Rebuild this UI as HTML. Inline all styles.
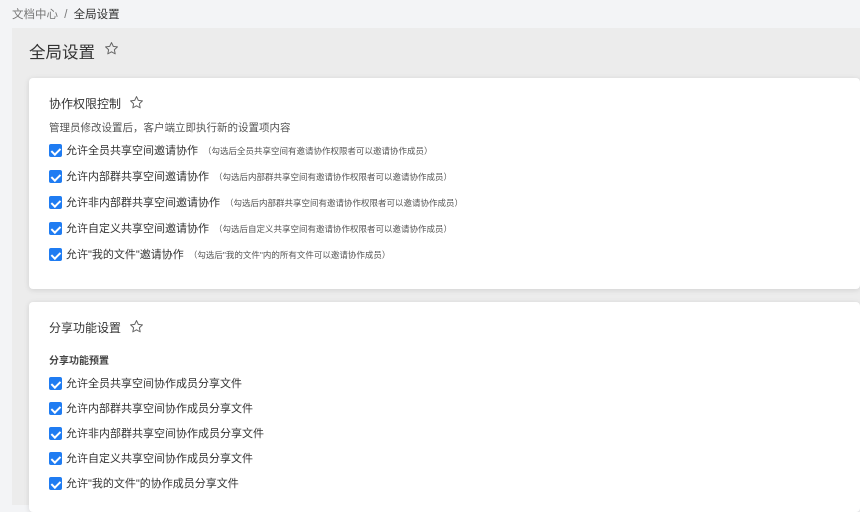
<!DOCTYPE html>
<html><head><meta charset="utf-8"><style>
*{margin:0;padding:0;box-sizing:border-box}
body{width:860px;height:505px;overflow:hidden;background:#f3f4f6;font-family:"Liberation Sans","Noto Sans CJK SC",sans-serif;color:#333;position:relative}
.abs{position:absolute;white-space:nowrap}
.panel{position:absolute;left:12px;top:28px;width:848px;height:477px;background:#ececec}
.card{position:absolute;left:29px;width:831px;background:#fff;border-radius:4px;box-shadow:0 1px 6px rgba(0,0,0,.12)}
.cb{position:absolute;left:49px;width:13px;height:13px;background:#1f7cf2;border-radius:2px}
.cb:after{content:"";position:absolute;left:4px;top:1.5px;width:3.5px;height:7px;border:solid #fff;border-width:0 2px 2px 0;transform:rotate(45deg)}
.lb{position:absolute;left:66px;font-size:11px;color:#333;white-space:nowrap;line-height:14px}
.lb small{font-size:8.5px;color:#555;margin-left:5px}
</style></head><body>
<div class="abs" style="left:12px;top:6px;font-size:11.5px;color:#777">文档中心 <span style="margin:0 3px">/</span> <span style="color:#333">全局设置</span></div>
<div class="panel"></div>
<div class="abs" style="left:29px;top:39px;font-size:16.5px;color:#333">全局设置</div>
<svg class="abs" style="left:104px;top:41px" width="15" height="15" viewBox="0 0 24 24"><path d="M12 2.5l2.9 6.1 6.6.8-4.9 4.6 1.3 6.6L12 17.3l-5.9 3.3 1.3-6.6-4.9-4.6 6.6-.8z" fill="none" stroke="#666" stroke-width="1.6" stroke-linejoin="round"/></svg>
<div class="card" style="top:78px;height:211px"></div>
<div class="card" style="top:302px;height:210px"></div>
<div class="abs" style="left:49px;top:95px;font-size:12px">协作权限控制</div>
<svg class="abs" style="left:129px;top:95px" width="15" height="15" viewBox="0 0 24 24"><path d="M12 2.5l2.9 6.1 6.6.8-4.9 4.6 1.3 6.6L12 17.3l-5.9 3.3 1.3-6.6-4.9-4.6 6.6-.8z" fill="none" stroke="#666" stroke-width="1.6" stroke-linejoin="round"/></svg>
<div class="abs" style="left:49px;top:120px;font-size:10.5px;color:#555">管理员修改设置后，客户端立即执行新的设置项内容</div>
<div class="cb" style="top:144px"></div><div class="lb" style="top:144px">允许全员共享空间邀请协作<small>（勾选后全员共享空间有邀请协作权限者可以邀请协作成员）</small></div>
<div class="cb" style="top:170px"></div><div class="lb" style="top:170px">允许内部群共享空间邀请协作<small>（勾选后内部群共享空间有邀请协作权限者可以邀请协作成员）</small></div>
<div class="cb" style="top:196px"></div><div class="lb" style="top:196px">允许非内部群共享空间邀请协作<small>（勾选后内部群共享空间有邀请协作权限者可以邀请协作成员）</small></div>
<div class="cb" style="top:222px"></div><div class="lb" style="top:222px">允许自定义共享空间邀请协作<small>（勾选后自定义共享空间有邀请协作权限者可以邀请协作成员）</small></div>
<div class="cb" style="top:248px"></div><div class="lb" style="top:248px">允许"我的文件"邀请协作<small>（勾选后"我的文件"内的所有文件可以邀请协作成员）</small></div>
<div class="abs" style="left:49px;top:319px;font-size:12px">分享功能设置</div>
<svg class="abs" style="left:129px;top:319px" width="15" height="15" viewBox="0 0 24 24"><path d="M12 2.5l2.9 6.1 6.6.8-4.9 4.6 1.3 6.6L12 17.3l-5.9 3.3 1.3-6.6-4.9-4.6 6.6-.8z" fill="none" stroke="#666" stroke-width="1.6" stroke-linejoin="round"/></svg>
<div class="abs" style="left:49px;top:352px;font-size:10px;font-weight:bold;color:#444">分享功能预置</div>
<div class="cb" style="top:377px"></div><div class="lb" style="top:377px">允许全员共享空间协作成员分享文件</div>
<div class="cb" style="top:402px"></div><div class="lb" style="top:402px">允许内部群共享空间协作成员分享文件</div>
<div class="cb" style="top:427px"></div><div class="lb" style="top:427px">允许非内部群共享空间协作成员分享文件</div>
<div class="cb" style="top:452px"></div><div class="lb" style="top:452px">允许自定义共享空间协作成员分享文件</div>
<div class="cb" style="top:477px"></div><div class="lb" style="top:477px">允许"我的文件"的协作成员分享文件</div>
</body></html>
